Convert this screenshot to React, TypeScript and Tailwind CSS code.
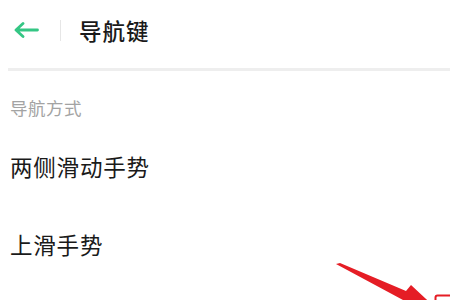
import React from "react";

export default function App() {
  const cjk = { fontFamily: '"Noto Sans CJK SC", "Noto Sans", sans-serif' };
  return (
    <div className="relative w-[450px] h-[300px] overflow-hidden bg-white" style={cjk}>
      <div className="flex flex-col">
        <div className="h-[68px] pb-[8px] flex items-center">
          <div className="w-[60px] pl-[14px] flex items-center">
            <svg width="25" height="16" viewBox="0 0 25 16" fill="none">
              <path d="M9 1.5 L2 8 L9 14.5 M2.5 8 H23.5" stroke="#34c684" strokeWidth="2.8" strokeLinecap="round" strokeLinejoin="round" />
            </svg>
          </div>
          <div className="w-px h-[21px] bg-[#e6e6e6]" />
          <div className="ml-[18px] text-[22.5px] leading-none text-[#1a1a1a] font-medium tracking-[1px]">导航键</div>
        </div>
        <div className="ml-2 h-[3px] bg-[#eeeeee] blur-[0.5px]" />
        <div className="mt-[25px] h-[24px] flex items-center pl-[10px] text-[17.5px] text-[#a3a3a3] tracking-[0.5px]">导航方式</div>
        <div className="mt-[8px] h-[78px] flex items-center pl-[10px] text-[22.5px] text-[#1a1a1a] tracking-[0.8px]">两侧滑动手势</div>
        <div className="h-[78px] flex items-center pl-[10px] text-[22.5px] text-[#1a1a1a] tracking-[0.8px]">上滑手势</div>
      </div>
      <svg className="absolute inset-0 pointer-events-none" width="450" height="300" viewBox="0 0 450 300">
        <polygon points="336,264 340,263 406,291 411,285 440,312 400,318 403,300" fill="#e51d25" />
        <rect x="435.5" y="295.5" width="30" height="20" rx="2" fill="none" stroke="#e51d25" strokeWidth="2" />
      </svg>
    </div>
  );
}
